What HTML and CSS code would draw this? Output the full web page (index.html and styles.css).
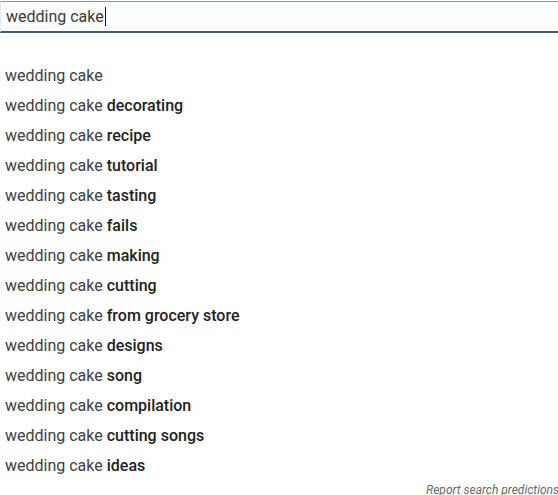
FILE: index.html
```html
<!DOCTYPE html>
<html>
<head>
<meta charset="utf-8">
<link rel="stylesheet" href="styles.css">
</head>
<body>
<div class="page">
  <div class="search">
    <div class="box"><span class="query">wedding cake</span><span class="caret"></span></div>
  </div>
  <ul class="list">
    <li>wedding cake</li>
    <li>wedding cake <b>decorating</b></li>
    <li>wedding cake <b>recipe</b></li>
    <li>wedding cake <b>tutorial</b></li>
    <li>wedding cake <b>tasting</b></li>
    <li>wedding cake <b>fails</b></li>
    <li>wedding cake <b>making</b></li>
    <li>wedding cake <b>cutting</b></li>
    <li>wedding cake <b>from grocery store</b></li>
    <li>wedding cake <b>designs</b></li>
    <li>wedding cake <b>song</b></li>
    <li>wedding cake <b>compilation</b></li>
    <li>wedding cake <b>cutting songs</b></li>
    <li>wedding cake <b>ideas</b></li>
  </ul>
  <div class="report">Report search predictions</div>
</div>
</body>
</html>
```
FILE: styles.css
```css
html, body {
  margin: 0;
  padding: 0;
  background: #fff;
  overflow: hidden;
}
.page {
  width: 558px;
  height: 495px;
  font-family: Roboto, "Liberation Sans", sans-serif;
  overflow: hidden;
}
.search {
  padding-top: 1px;
}
.box {
  height: 29px;
  border-top: 1px solid #8799ad;
  border-bottom: 2px solid #4a5870;
  border-left: 1px solid #e4e8ec;
  background: #fdfefe;
  display: flex;
  align-items: center;
  padding-left: 5px;
  font-size: 16px;
  color: #3a3a3a;
}
.caret {
  display: inline-block;
  width: 1px;
  height: 19px;
  background: #111;
  margin-left: 1px;
}
.list {
  list-style: none;
  margin: 28px 0 0 0;
  padding: 0;
}
.list li {
  height: 30px;
  line-height: 30px;
  padding-left: 5px;
  font-size: 16px;
  color: #404040;
  white-space: nowrap;
}
.list b {
  font-weight: 500;
  color: #222;
}
.report {
  padding-left: 426px;
  line-height: 18px;
  font-size: 12px;
  font-style: italic;
  color: #6a6a6a;
  white-space: nowrap;
}
```
